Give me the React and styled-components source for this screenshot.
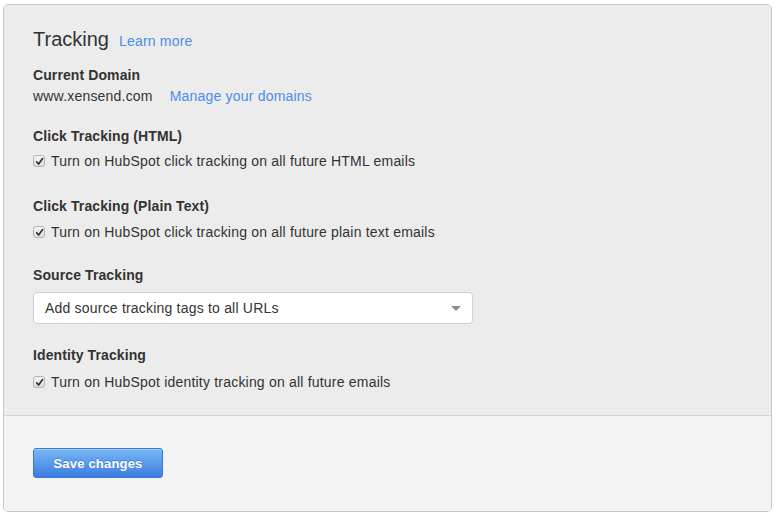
import React from "react";
import styled, { createGlobalStyle } from "styled-components";

const Global = createGlobalStyle`
  html, body { margin: 0; padding: 0; background: #ffffff; }
  body { font-family: "Liberation Sans", Arial, Helvetica, sans-serif; color: #333; }
  * { box-sizing: border-box; }
`;

const Panel = styled.div`
  margin: 4px 0 0 3px;
  width: 769px;
  height: 508px;
  border: 1px solid #c9c9c9;
  border-radius: 5px;
  overflow: hidden;
  display: flex;
  flex-direction: column;
`;

const Body = styled.div`
  background: #ececec;
  padding: 22px 30px 23px 29px;
  border-bottom: 1px solid #d4d4d4;
  display: flex;
  flex-direction: column;
`;

const Footer = styled.div`
  flex: 1;
  background: #f4f4f4;
  padding: 32px 29px 0;
`;

const TitleRow = styled.div`
  display: flex;
  align-items: baseline;
  gap: 10px;
  height: 24px;
`;

const Title = styled.h2`
  margin: 0;
  font-size: 20px;
  line-height: 24px;
  font-weight: normal;
  color: #333;
`;

const Link = styled.a`
  font-size: 14px;
  line-height: 20px;
  letter-spacing: 0.2px;
  color: #4a8ee6;
  text-decoration: none;
  cursor: pointer;
`;

const Section = styled.div`
  margin-top: ${(p) => p.$mt}px;
  display: flex;
  flex-direction: column;
  gap: ${(p) => p.$gap}px;
`;

const Label = styled.div`
  font-size: 14px;
  line-height: 20px;
  font-weight: bold;
  letter-spacing: 0.1px;
  color: #333;
`;

const Line = styled.div`
  display: flex;
  align-items: center;
  gap: 17px;
  font-size: 14px;
  line-height: 20px;
  letter-spacing: 0.2px;
  color: #333;
`;

const CheckRow = styled.label`
  display: flex;
  align-items: center;
  gap: 6px;
  font-size: 14px;
  line-height: 20px;
  letter-spacing: 0.2px;
  color: #333;
`;

const Box = styled.span`
  width: 12px;
  height: 12px;
  border: 1px solid #b4b4b4;
  border-radius: 3px;
  background: linear-gradient(#f4f4f4, #dedede);
  display: inline-flex;
  align-items: center;
  justify-content: center;
  flex: none;
`;

const Select = styled.div`
  width: 440px;
  height: 32px;
  background: #fff;
  border: 1px solid #cfcfcf;
  border-radius: 4px;
  display: flex;
  align-items: center;
  justify-content: space-between;
  padding: 0 11px 0 11px;
  font-size: 14px;
  letter-spacing: 0.2px;
  color: #333;
`;

const Caret = styled.span`
  width: 0;
  height: 0;
  border-left: 5px solid transparent;
  border-right: 5px solid transparent;
  border-top: 5px solid #8f8f8f;
`;

const Button = styled.button`
  width: 130px;
  height: 30px;
  border: 1px solid #3a78d8;
  border-radius: 3px;
  background: linear-gradient(#78b7f4, #3c7de1);
  color: #fff;
  font-family: "Liberation Sans", Arial, sans-serif;
  font-weight: bold;
  font-size: 13px;
  letter-spacing: 0.2px;
  text-shadow: 0 -1px 0 rgba(30, 80, 170, 0.45);
  box-shadow: inset 0 1px 0 rgba(255, 255, 255, 0.3);
  cursor: pointer;
  padding: 0;
`;

const Check = () => (
  <Box>
    <svg width="9" height="9" viewBox="0 0 9 9">
      <path d="M1.6 4.8 L3.6 7 L7.6 1.6" fill="none" stroke="#333" strokeWidth="1.7" strokeLinecap="round" strokeLinejoin="round" />
    </svg>
  </Box>
);

export default function App() {
  return (
    <>
      <Global />
      <Panel>
        <Body>
          <TitleRow>
            <Title>Tracking</Title>
            <Link>Learn more</Link>
          </TitleRow>
          <Section $mt={14} $gap={1}>
            <Label>Current Domain</Label>
            <Line>
              <span>www.xensend.com</span>
              <Link>Manage your domains</Link>
            </Line>
          </Section>
          <Section $mt={20} $gap={5}>
            <Label>Click Tracking (HTML)</Label>
            <CheckRow>
              <Check />
              Turn on HubSpot click tracking on all future HTML emails
            </CheckRow>
          </Section>
          <Section $mt={25} $gap={6}>
            <Label>Click Tracking (Plain Text)</Label>
            <CheckRow>
              <Check />
              Turn on HubSpot click tracking on all future plain text emails
            </CheckRow>
          </Section>
          <Section $mt={23} $gap={7}>
            <Label>Source Tracking</Label>
            <Select>
              <span>Add source tracking tags to all URLs</span>
              <Caret />
            </Select>
          </Section>
          <Section $mt={21} $gap={7}>
            <Label>Identity Tracking</Label>
            <CheckRow>
              <Check />
              Turn on HubSpot identity tracking on all future emails
            </CheckRow>
          </Section>
        </Body>
        <Footer>
          <Button>Save changes</Button>
        </Footer>
      </Panel>
    </>
  );
}
